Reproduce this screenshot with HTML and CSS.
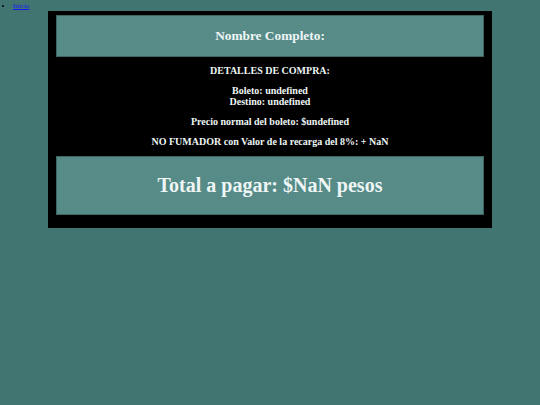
FILE: index.html
```html
<!DOCTYPE html>
<html lang="es">
<head>
<meta charset="utf-8">
<title>Compra</title>
<link rel="stylesheet" href="styles.css">
</head>
<body>
<ul class="nav">
  <li><a href="#">Inicio</a></li>
</ul>
<div class="ticket">
  <div class="band band-name">Nombre Completo:</div>
  <div class="details">
    <p>DETALLES DE COMPRA:</p>
    <p>Boleto: undefined<br>Destino: undefined</p>
    <p>Precio normal del boleto: $undefined</p>
    <p>NO FUMADOR con Valor de la recarga del 8%: + NaN</p>
  </div>
  <div class="band band-total">Total a pagar: $NaN pesos</div>
</div>
</body>
</html>
```
FILE: styles.css
```css
html, body {
  margin: 0;
  padding: 0;
  background: #407572;
  font-family: "Liberation Serif", "Times New Roman", serif;
}
.nav {
  margin: 0;
  padding: 2px 0 0 13px;
  font-size: 7px;
  line-height: 8px;
  color: #000;
}
.nav a {
  color: #1a1aee;
}
.ticket {
  width: 444px;
  margin: 1px auto 0;
  background: #000;
  padding: 4px 8px 13px;
  box-sizing: border-box;
  color: #eef6f5;
  font-weight: bold;
  text-align: center;
}
.band {
  background: #568b88;
  border: 1px solid #3b6664;
  box-sizing: border-box;
  display: flex;
  align-items: center;
  justify-content: center;
}
.band-name {
  height: 42px;
  font-size: 13.33px;
}
.band-total {
  height: 59px;
  font-size: 20px;
}
.details {
  display: flex;
  flex-direction: column;
  gap: 9px;
  padding: 8px 0 9px;
  font-size: 10px;
  line-height: 11px;
}
.details p {
  margin: 0;
}
```
